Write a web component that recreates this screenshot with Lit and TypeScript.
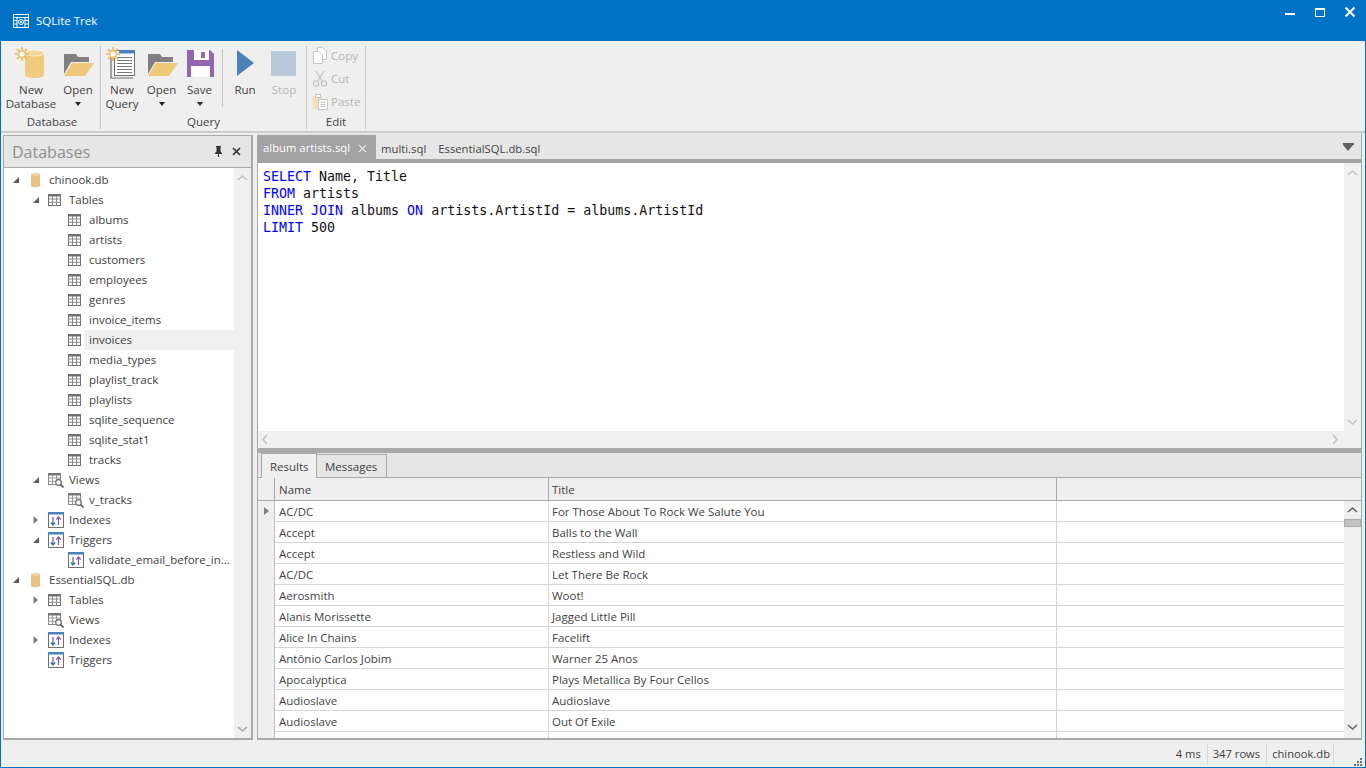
import { LitElement, html, css, svg } from "lit";
import { customElement } from "lit/decorators.js";

const star = (x: number, y: number) => svg`<g transform="translate(${x} ${y})" stroke="#efb45a" stroke-width="1.6" fill="none">
  <path d="M7 0V14M0 7H14M2 2L12 12M12 2L2 12"/><circle cx="7" cy="7" r="3.4" fill="#fff" stroke="#f0c070"/></g>`;

const iconDb = svg`<svg class="big" viewBox="0 0 32 32">
  <path d="M10 6C10 3 29 3 29 6V28C29 32 10 32 10 28Z" fill="#efca7f"/>
  <ellipse cx="19.5" cy="6" rx="9.5" ry="3" fill="#f4d697" stroke="#fff" stroke-width=".6"/>
  ${star(0, 0)}</svg>`;

const iconOpen = svg`<svg class="big" viewBox="0 0 32 32">
  <path d="M2 7H14L16 10H27V15H9L2 27Z" fill="#808080"/>
  <path d="M2 29L10 16H32L23 29Z" fill="#efc87a"/></svg>`;

const iconQuery = svg`<svg class="big" viewBox="0 0 32 32">
  <path d="M5 7V31H27" fill="none" stroke="#6e6e6e" stroke-width="1.2"/>
  <rect x="8.5" y="3.5" width="20" height="25" fill="#fff" stroke="#6e6e6e"/>
  <rect x="13" y="3" width="16" height="3.5" fill="#4a80bb"/>
  <path d="M11 10.500H26M11 13.500H26M11 16.500H26M11 19.500H26M11 22.500H26M11 25.500H26" stroke="#777" stroke-width="1"/>
  ${star(0, 0)}</svg>`;

const iconSave = svg`<svg class="big" viewBox="0 0 32 32">
  <path d="M3 3H26L30 7V30H3Z" fill="#9565ad"/>
  <rect x="10" y="3" width="15" height="10" fill="#fff"/><rect x="17" y="5" width="4" height="6" fill="#9565ad"/>
  <rect x="7" y="19" width="19" height="11" fill="#fff"/></svg>`;

const iconRun = svg`<svg class="big" viewBox="0 0 32 32"><path d="M8 3L25 16L8 29Z" fill="#4d82b8"/></svg>`;
const iconStop = svg`<svg class="big" viewBox="0 0 32 32"><rect x="3" y="4" width="25" height="25" fill="#b8c9da"/></svg>`;

const iconCopy = svg`<svg class="small" viewBox="0 0 16 17" fill="#fff" stroke="#c6c6c6">
  <path d="M5.500 .5H11L14.500 4V12.500H5.500Z"/><path d="M1.500 4.500H7L10.500 8V16.500H1.500Z"/></svg>`;
const iconCut = svg`<svg class="small" viewBox="0 0 16 17" fill="none" stroke="#c6c6c6" stroke-width="1.300">
  <path d="M4 1L10.500 11M12 1L5.500 11"/><circle cx="4" cy="13.500" r="2.600"/><circle cx="12" cy="13.500" r="2.600"/></svg>`;
const iconPaste = svg`<svg class="small" viewBox="0 0 16 17">
  <rect x="1" y="3" width="9" height="13" fill="#f3dfb8"/><rect x="3.500" y="1.500" width="5" height="3" fill="#fff" stroke="#c6c6c6"/>
  <rect x="6.500" y="6.500" width="9" height="10" fill="#fff" stroke="#c6c6c6"/>
  <path d="M8.500 9.500H13.500M8.500 11.500H13.500M8.500 13.500H13.500" stroke="#c6c6c6"/></svg>`;

const iconTitle = svg`<svg class="ticon" viewBox="0 0 16 14" fill="none" stroke="#fff" stroke-width="1">
  <rect x=".5" y=".5" width="15" height="13"/><path d="M.5 3.500H15.500M.5 6.500H4M12 6.500H15.500M.5 10H4M12 10H15.500M4 3.500V13.500M12 3.500V13.500"/>
  <circle cx="8" cy="8" r="2.500"/><circle cx="8" cy="8" r=".7" fill="#fff"/></svg>`;

const iconDbSmall = svg`<svg class="ti" viewBox="0 0 16 16">
  <path d="M3 2.500C3 .8 12 .8 12 2.500V14C12 15.700 3 15.700 3 14Z" fill="#e9c283"/>
  <ellipse cx="7.500" cy="2.500" rx="4.500" ry="1.300" fill="#f1d6a6"/></svg>`;

const iconTable = svg`<svg class="ti" viewBox="0 0 16 16">
  <rect x=".5" y="2.500" width="12" height="11" fill="#fff" stroke="#707070"/>
  <rect x="0" y="2" width="13" height="2.500" fill="#707070"/>
  <path d="M.5 7H12.500M.5 10.300H12.500M4.500 4V13.500M8.500 4V13.500" stroke="#8a8a8a"/></svg>`;

const iconView = svg`<svg class="ti" viewBox="0 0 16 16">
  <rect x=".5" y="1.500" width="12" height="11" fill="#fff" stroke="#888"/>
  <rect x="0" y="1" width="13" height="2.500" fill="#777"/>
  <path d="M.5 6H12.500M.5 9.300H12.500M4.500 3V12.500M8.500 3V12.500" stroke="#9a9a9a"/>
  <circle cx="10.500" cy="10.500" r="2.800" fill="#fff" stroke="#666" stroke-width="1.200"/>
  <path d="M12.500 12.500L15.500 15.500" stroke="#555" stroke-width="1.600"/></svg>`;

const iconTrigger = svg`<svg class="ti" viewBox="0 0 16 16">
  <rect x=".5" y=".5" width="15" height="15" fill="#fff" stroke="#6f6f6f"/>
  <rect x="0" y="0" width="16" height="2.500" fill="#4a80bb"/>
  <path d="M5 5V13M2.800 10.500L5 13L7.200 10.500" fill="none" stroke="#2f6fb0" stroke-width="1.200"/>
  <path d="M10.500 13V5M8.300 7.500L10.500 5L12.700 7.500" fill="none" stroke="#8a56a8" stroke-width="1.200"/></svg>`;

const chev = (d: "u" | "d" | "l" | "r", color = "#c4c4c4") => {
  const p = { u: "M1 7L5.500 3L10 7", d: "M1 3L5.500 7L10 3", l: "M7 1L3 5.500L7 10", r: "M3 1L7 5.500L3 10" }[d];
  return svg`<svg class="chev" viewBox="0 0 11 11"><path d=${p} fill="none" stroke=${color} stroke-width="1.600"/></svg>`;
};

type Node = [number, "o" | "c" | "", any, string, boolean?];
const tree: Node[] = [
  [0, "o", iconDbSmall, "chinook.db"],
  [1, "o", iconTable, "Tables"],
  [2, "", iconTable, "albums"],
  [2, "", iconTable, "artists"],
  [2, "", iconTable, "customers"],
  [2, "", iconTable, "employees"],
  [2, "", iconTable, "genres"],
  [2, "", iconTable, "invoice_items"],
  [2, "", iconTable, "invoices", true],
  [2, "", iconTable, "media_types"],
  [2, "", iconTable, "playlist_track"],
  [2, "", iconTable, "playlists"],
  [2, "", iconTable, "sqlite_sequence"],
  [2, "", iconTable, "sqlite_stat1"],
  [2, "", iconTable, "tracks"],
  [1, "o", iconView, "Views"],
  [2, "", iconView, "v_tracks"],
  [1, "c", iconTrigger, "Indexes"],
  [1, "o", iconTrigger, "Triggers"],
  [2, "", iconTrigger, "validate_email_before_in..."],
  [0, "o", iconDbSmall, "EssentialSQL.db"],
  [1, "c", iconTable, "Tables"],
  [1, "", iconView, "Views"],
  [1, "c", iconTrigger, "Indexes"],
  [1, "", iconTrigger, "Triggers"],
];

const rows: [string, string][] = [
  ["AC/DC", "For Those About To Rock We Salute You"],
  ["Accept", "Balls to the Wall"],
  ["Accept", "Restless and Wild"],
  ["AC/DC", "Let There Be Rock"],
  ["Aerosmith", "Woot!"],
  ["Alanis Morissette", "Jagged Little Pill"],
  ["Alice In Chains", "Facelift"],
  ["Antônio Carlos Jobim", "Warner 25 Anos"],
  ["Apocalyptica", "Plays Metallica By Four Cellos"],
  ["Audioslave", "Audioslave"],
  ["Audioslave", "Out Of Exile"],
  ["", ""],
];

@customElement("app-root")
export class AppRoot extends LitElement {
  static styles = css`
    :host { display: block; width: 1366px; height: 768px; overflow: hidden; }
    * { box-sizing: border-box; }
    .win { width: 1366px; height: 768px; display: flex; flex-direction: column; background: #efefef;
      border: 1px solid #0072c6; border-top: 0; font: 11.5px/14px "Open Sans", sans-serif; color: #3f3f3f; }
    .title { height: 41px; background: #0072c6; margin: 0 -1px; display: flex; align-items: center; color: #fff; padding: 1px 0 0 13px; flex: none; }
    .ticon { width: 16px; height: 14px; margin-right: 7px; margin-top: -1px; }
    .title-text { flex: 1; font-size: 11.5px; }
    .wc { width: 30px; height: 30px; display: flex; align-items: center; justify-content: center; }
    .wc svg { width: 12px; height: 12px; }
    .wcs { display: flex; align-self: flex-start; padding-right: 1px; margin-top: -4px; }
    .ribbon { height: 92px; flex: none; display: flex; border-bottom: 2px solid #cdcdcd; padding-left: 3px; }
    .group { margin-top: 5px; height: 83px; border-right: 1px solid #c6c6c6; display: flex; flex-direction: column; }
    .btns { display: flex; height: 69px; padding-top: 1px; }
    .cap { text-align: center; height: 14px; color: #444; }
    .b { display: flex; flex-direction: column; align-items: center; text-align: center; }
    .big { width: 32px; height: 32px; flex: none; margin-bottom: 4px; }
    .tri { width: 0; height: 0; border: 3.5px solid transparent; border-top: 4px solid #222; border-bottom: 0; margin-top: 5px; }
    .dis { color: #b5b5b5; }
    .isep { width: 1px; height: 58px; margin: 2px 3px 0 3px; background: #c6c6c6; }
    .smalls { margin-top: -3px; padding-left: 5px; display: flex; flex-direction: column; }
    .sb { height: 23px; display: flex; align-items: center; color: #b5b5b5; }
    .small { width: 16px; height: 17px; margin-right: 3px; }
    .main { flex: 1; min-height: 0; display: flex; padding: 2px 2px 0 2px; }
    .dock { width: 250px; height: 605px; flex: none; border: 1px solid #a9a9a9; border-right-width: 2px; border-bottom-width: 2px; display: flex; flex-direction: column; }
    .dock-h { height: 32px; flex: none; background: #e6e6e6; border-bottom: 1px solid #a9a9a9; display: flex; align-items: center; padding: 0 10px 0 8px; color: #8f8f8f; font-size: 16px; }
    .dock-h span { flex: 1; }
    .dock-h svg { width: 9px; height: 11px; margin-left: 9px; }
    .tree-wrap { flex: 1; display: flex; min-height: 0; }
    .tree { flex: 1; background: #fff; overflow: hidden; padding-top: 2px; }
    .sbar { width: 17px; flex: none; background: #f0f0f0; display: flex; flex-direction: column; align-items: center; justify-content: space-between; padding: 5px 0 3px; }
    .chev { width: 11px; height: 11px; display: block; }
    .tr { height: 20px; display: flex; align-items: center; line-height: 20px; }
    .tw { width: 20px; flex: none; padding-left: 4px; }
    .tw svg { display: block; width: 8px; height: 8px; }
    .ti { width: 16px; height: 16px; flex: none; }
    .tl { flex: 1; padding-left: 5px; height: 20px; color: #404040; white-space: nowrap; }
    .tl.sel { background: #f0f0f0; }
    .right { width: 1105px; margin-left: 4px; height: 607px; margin-top: -2px; flex: none; display: flex; flex-direction: column; border-right: 1px solid #a9a9a9; border-bottom: 2px solid #a9a9a9; }
    .tabs { height: 26px; padding-top: 2px; flex: none; display: flex; background: #e6e6e6; font-size: 11.3px; }
    .tab { line-height: 28px; padding: 0 7px 0 5px; color: #444; white-space: nowrap; }
    .tab.on { background: #a3a3a3; color: #fff; width: 119px; display: flex; justify-content: space-between; align-items: center; padding: 2px 9px 0 6px; }
    .tab.on svg { width: 9px; height: 9px; }
    .tabs i { flex: 1; }
    .tabs .menu { width: 0; height: 0; border: 5.500px solid transparent; border-top: 6px solid #5f5f5f; border-bottom: 0; margin: 10px 8px 0 0; position: relative; }
    .tabs .menu::before { content: ""; position: absolute; left: -5.500px; top: -8px; width: 11px; height: 1.500px; background: #5f5f5f; }
    .band { height: 4px; flex: none; background: #a3a3a3; }
    .editor { height: 268px; flex: none; display: flex; background: #fff; border-left: 1px solid #a9a9a9; }
    pre { flex: 1; margin: 0; padding: 5px 0 0 5px; font: 13.3px/17px "DejaVu Sans Mono", monospace; color: #111; }
    pre b { font-weight: 400; color: #0000ff; }
    .hbar { height: 17px; flex: none; background: #f0f0f0; display: flex; align-items: center; justify-content: space-between; padding: 0 20px 0 2px; border-left: 1px solid #a9a9a9; }
    .split { height: 5px; flex: none; background: #a9a9a9; }
    .rtabs { height: 25px; flex: none; background: #e6e6e6; border-bottom: 1px solid #a9a9a9; border-left: 1px solid #a9a9a9; display: flex; align-items: flex-end; padding-left: 3px; }
    .rtab { border: 1px solid #a9a9a9; border-bottom: 0; padding: 0 8px; height: 23px; line-height: 23px; }
    .rtab.on { background: #efefef; height: 25px; margin-bottom: -1px; line-height: 26px; width: 56px; }
    .rtab.off { border-left: 0; width: 70px; }
    .grid { flex: 1; min-height: 0; display: flex; flex-direction: column; overflow: hidden; border-left: 1px solid #a9a9a9; }
    .hdr { height: 23px; flex: none; display: grid; grid-template-columns: 17px 274px 508px 1fr; border-bottom: 1px solid #a9a9a9; background: #efefef; }
    .hdr div { border-right: 1px solid #a9a9a9; padding-left: 4px; line-height: 24px; }
    .hdr div:nth-child(3) { padding-left: 3px; }
    .hdr div:last-child { border-right: 0; }
    .gbody { flex: 1; min-height: 0; display: flex; }
    .gmain { flex: 1; overflow: hidden; }
    .row { height: 21px; display: grid; grid-template-columns: 17px 274px 508px 1fr; border-bottom: 1px solid #d6d6d6; background: #fff; }
    .row div { border-right: 1px solid #d6d6d6; padding-left: 4px; line-height: 21px; white-space: nowrap; }
    .row div:nth-child(3) { padding-left: 3px; }
    .row div:first-child { background: #efefef; padding-left: 6px; padding-top: 6px; line-height: 0; border-right-color: #bdbdbd; }
    .row div:last-child { border-right: 0; }
    .rowtri { display: block; width: 0; height: 0; border: 4px solid transparent; border-left: 5px solid #808080; border-right: 0; }
    .vbar { width: 17px; flex: none; background: #f0f0f0; display: flex; flex-direction: column; align-items: center; padding: 4px 0 5px; }
    .thumb { width: 17px; height: 8px; background: #c2c2c2; border: 1px solid #adadad; margin-top: 3px; flex: none; }
    .vbar .sp { flex: 1; }
    .status { height: 27px; flex: none; display: flex; justify-content: flex-end; align-items: center; line-height: 27px; padding-right: 3px; }
    .st { padding: 0 6px 0 5px; border-right: 1px solid #d9d9d9; height: 20px; line-height: 20px; font-size: 11.2px; }
    .st.last { padding-right: 3px; }
    .grip { width: 28px; align-self: flex-end; height: 10px; display: flex; justify-content: flex-end; }
    .grip svg { width: 8px; height: 9px; }
  `;

  render() {
    return html`<div class="win">
      <div class="title">
        ${iconTitle}<div class="title-text">SQLite Trek</div>
        <div class="wcs">
          <div class="wc"><svg viewBox="0 0 12 12"><rect x="1" y="7" width="10" height="2" fill="#fff"/></svg></div>
          <div class="wc"><svg viewBox="0 0 12 12" fill="none" stroke="#fff"><rect x="1.500" y="2.500" width="9" height="8"/><rect x="1" y="2" width="10" height="2" fill="#fff" stroke="none"/></svg></div>
          <div class="wc"><svg viewBox="0 0 12 12" fill="none" stroke="#fff" stroke-width="2"><path d="M1.500 1.500L10.500 10.500M10.500 1.500L1.500 10.500"/></svg></div>
        </div>
      </div>

      <div class="ribbon">
        <div class="group" style="width:97px">
          <div class="btns">
            <div class="b" style="width:54px">${iconDb}<span>New<br />Database</span></div>
            <div class="b" style="width:40px">${iconOpen}<span>Open</span><span class="tri"></span></div>
          </div>
          <div class="cap">Database</div>
        </div>
        <div class="group" style="width:206px">
          <div class="btns">
            <div class="b" style="width:42px">${iconQuery}<span>New<br />Query</span></div>
            <div class="b" style="width:37px">${iconOpen}<span>Open</span><span class="tri"></span></div>
            <div class="b" style="width:39px">${iconSave}<span>Save</span><span class="tri"></span></div>
            <div class="isep"></div>
            <div class="b" style="width:38px">${iconRun}<span>Run</span></div>
            <div class="b dis" style="width:40px">${iconStop}<span>Stop</span></div>
          </div>
          <div class="cap">Query</div>
        </div>
        <div class="group" style="width:59px">
          <div class="btns">
            <div class="smalls">
              <div class="sb">${iconCopy}Copy</div>
              <div class="sb">${iconCut}Cut</div>
              <div class="sb">${iconPaste}Paste</div>
            </div>
          </div>
          <div class="cap">Edit</div>
        </div>
      </div>

      <div class="main">
        <div class="dock">
          <div class="dock-h">
            <span>Databases</span>
            <svg viewBox="0 0 9 11"><path d="M2 0H7V1H6.500V5.500L8 7V8H5V11H4V8H1V7L2.500 5.500V1H2Z" fill="#333"/></svg>
            <svg viewBox="0 0 9 11" fill="none" stroke="#333" stroke-width="1.700"><path d="M1 2L8 9M8 2L1 9"/></svg>
          </div>
          <div class="tree-wrap">
            <div class="tree">
              ${tree.map(([lvl, state, icon, text, sel]) => html`<div class="tr" style="padding-left:${4 + 20 * lvl}px">
                <div class="tw">${state === "o"
                  ? svg`<svg viewBox="0 0 8 8"><path d="M7 1V7H1Z" fill="#5a5a5a"/></svg>`
                  : state === "c"
                  ? svg`<svg viewBox="0 0 8 8"><path d="M1.500 0L6 4L1.500 8Z" fill="#7d7d7d"/></svg>`
                  : ""}</div>
                ${icon}
                <div class="tl ${sel ? "sel" : ""}">${text}</div>
              </div>`)}
            </div>
            <div class="sbar">${chev("u")}${chev("d", "#a8a8a8")}</div>
          </div>
        </div>

        <div class="right">
          <div class="tabs">
            <div class="tab on"><span>album artists.sql</span><svg viewBox="0 0 9 9" fill="none" stroke="#e4e4e4" stroke-width="1.200"><path d="M1 1L8 8M8 1L1 8"/></svg></div>
            <div class="tab">multi.sql</div>
            <div class="tab">EssentialSQL.db.sql</div>
            <i></i>
            <div class="menu"></div>
          </div>
          <div class="band"></div>
          <div class="editor">
            <pre><b>SELECT</b> Name, Title
<b>FROM</b> artists
<b>INNER JOIN</b> albums <b>ON</b> artists.ArtistId = albums.ArtistId
<b>LIMIT</b> 500</pre>
            <div class="sbar">${chev("u")}${chev("d")}</div>
          </div>
          <div class="hbar">${chev("l")}${chev("r")}</div>
          <div class="split"></div>
          <div class="rtabs">
            <div class="rtab on">Results</div>
            <div class="rtab off">Messages</div>
          </div>
          <div class="grid">
            <div class="hdr"><div></div><div>Name</div><div>Title</div><div></div></div>
            <div class="gbody">
              <div class="gmain">
                ${rows.map((r, i) => html`<div class="row">
                  <div>${i === 0 ? html`<span class="rowtri"></span>` : ""}</div>
                  <div>${r[0]}</div><div>${r[1]}</div><div></div>
                </div>`)}
              </div>
              <div class="vbar">
                ${chev("u", "#666")}
                <div class="thumb"></div>
                <div class="sp"></div>
                ${chev("d", "#666")}
              </div>
            </div>
          </div>
        </div>
      </div>

      <div class="status">
        <div class="st">4 ms</div>
        <div class="st">347 rows</div>
        <div class="st last">chinook.db</div>
        <div class="grip"><svg viewBox="0 0 8 9" fill="#6f6f6f"><rect x="6" y="1" width="2" height="2"/><rect x="3" y="4" width="2" height="2"/><rect x="6" y="4" width="2" height="2"/><rect x="0" y="7" width="2" height="2"/><rect x="3" y="7" width="2" height="2"/><rect x="6" y="7" width="2" height="2"/></svg></div>
      </div>
    </div>`;
  }
}
